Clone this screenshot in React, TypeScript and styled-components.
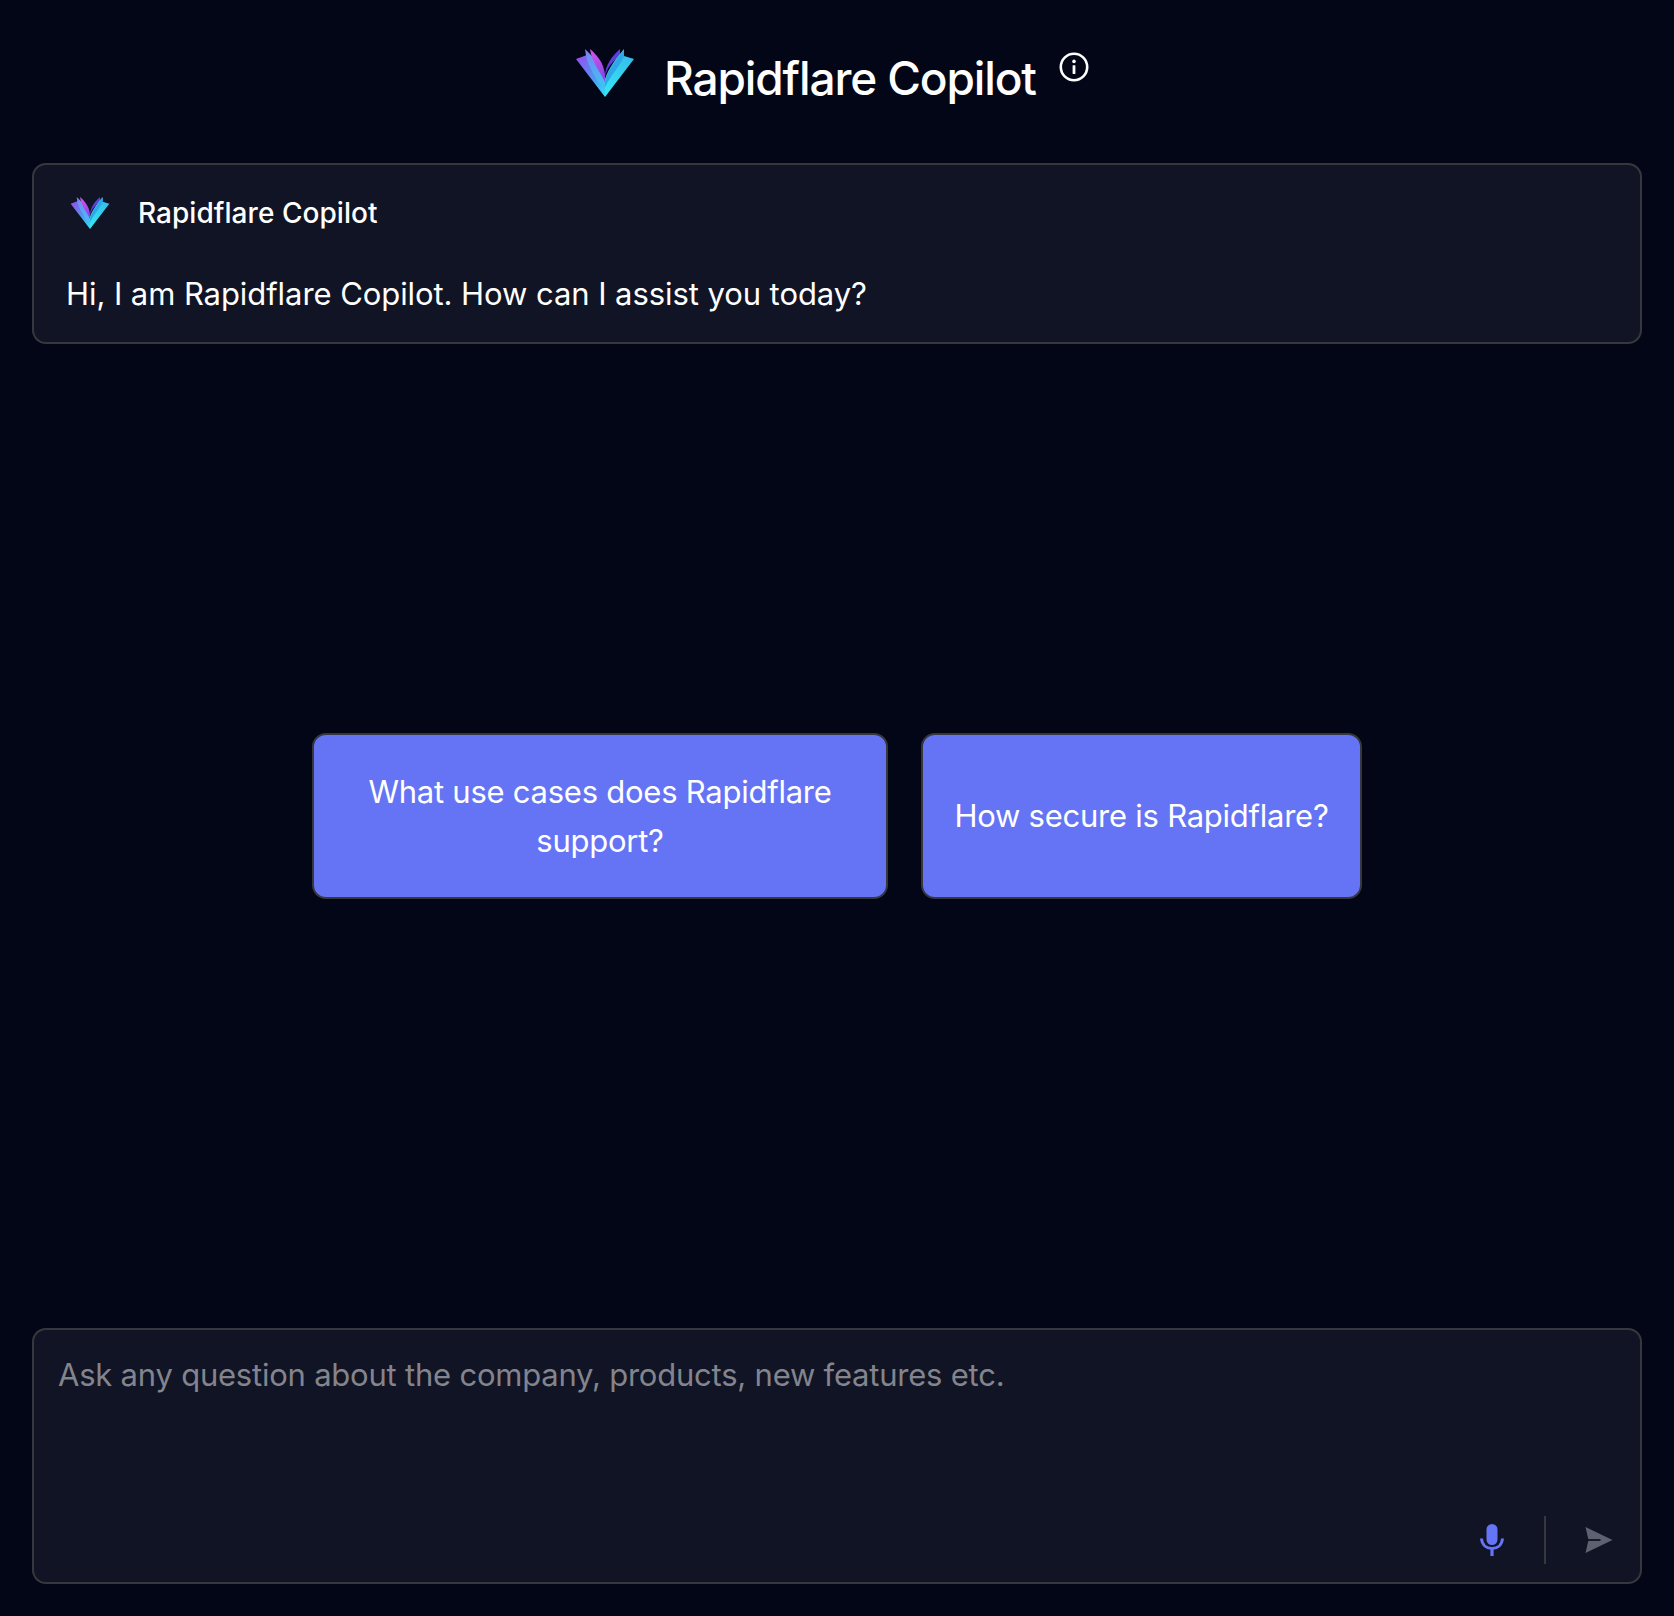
import React from "react";
import styled, { createGlobalStyle } from "styled-components";

const GlobalStyle = createGlobalStyle`
  html, body {
    margin: 0;
    padding: 0;
    background: #020617;
  }
  * {
    box-sizing: border-box;
  }
`;

function Logo({ size, id }: { size: number; id: string }) {
  return (
    <svg width={size} height={size * 0.8} viewBox="0 0 60 48" fill="none">
      <defs>
        <linearGradient id={`${id}-left`} x1="3" y1="10" x2="30" y2="46" gradientUnits="userSpaceOnUse">
          <stop offset="0" stopColor="#8f55f2" />
          <stop offset="0.55" stopColor="#5196f2" />
          <stop offset="1" stopColor="#33dcf2" />
        </linearGradient>
        <linearGradient id={`${id}-inner`} x1="14" y1="2" x2="30" y2="34" gradientUnits="userSpaceOnUse">
          <stop offset="0" stopColor="#7488f4" />
          <stop offset="1" stopColor="#42c0f4" />
        </linearGradient>
        <linearGradient id={`${id}-pink`} x1="16" y1="0" x2="30" y2="28" gradientUnits="userSpaceOnUse">
          <stop offset="0" stopColor="#d854ec" />
          <stop offset="1" stopColor="#8a46e6" />
        </linearGradient>
        <linearGradient id={`${id}-right`} x1="58" y1="10" x2="30" y2="46" gradientUnits="userSpaceOnUse">
          <stop offset="0" stopColor="#35bdea" />
          <stop offset="1" stopColor="#35e8f4" />
        </linearGradient>
      </defs>
      <path d="M1 10 L12 6 C14 22 22 32 30 36 L30 48 Z" fill={`url(#${id}-left)`} />
      <path d="M10 0 L18 8 C22 16 28 22 30 30 L30 40 C22 32 12 20 10 0 Z" fill={`url(#${id}-inner)`} />
      <path d="M15 0 C22 6 29 14 30 26 L30 33 C25 22 17 14 15 0 Z" fill={`url(#${id}-pink)`} />
      <path d="M45 0 L45 7 C38 12 32 18 30 28 C30 16 37 7 45 0 Z" fill="#5b3fd8" />
      <path d="M59 10 L49 7 L49 0 C42 8 33 20 30 30 L30 48 Z" fill={`url(#${id}-right)`} />
      <path d="M49 1 C43 9 33 20 30 32 L30 38 C36 26 44 18 49 8 Z" fill="#2fa6e8" />
    </svg>
  );
}

function App() {
  return (
    <>
      <GlobalStyle />
      <Page>
        <Header>
          <Logo size={60} id="big" />
          <Title>Rapidflare Copilot</Title>
          <InfoButton>
            <svg width="30" height="30" viewBox="0 0 30 30" fill="none">
              <circle cx="15" cy="15" r="13.2" stroke="#fff" strokeWidth="2.6" />
              <rect x="13.6" y="13.2" width="2.8" height="8.8" rx="0.6" fill="#fff" />
              <circle cx="15" cy="9.4" r="1.8" fill="#fff" />
            </svg>
          </InfoButton>
        </Header>

        <MessageCard>
          <Sender>
            <Logo size={40} id="small" />
            <SenderName>Rapidflare Copilot</SenderName>
          </Sender>
          <MessageText>Hi, I am Rapidflare Copilot. How can I assist you today?</MessageText>
        </MessageCard>

        <Suggestions>
          <Suggestion $width={576}>What use cases does Rapidflare support?</Suggestion>
          <Suggestion $width={441}>How secure is Rapidflare?</Suggestion>
        </Suggestions>

        <Composer>
          <Question>Ask any question about the company, products, new features etc.</Question>
          <ComposerActions>
            <MicButton>
              <svg width="24" height="33" viewBox="0 0 24 33" fill="none">
                <rect x="6.5" y="0" width="11" height="21" rx="5.5" fill="#6675f5" />
                <path d="M1.5 14.5 C2 21 6.5 24.5 12 24.5 C17.5 24.5 22 21 22.5 14.5" stroke="#6675f5" strokeWidth="3" />
                <rect x="10.4" y="24.5" width="3.2" height="7.5" fill="#6675f5" />
              </svg>
            </MicButton>
            <Divider />
            <SendButton>
              <svg width="28" height="26" viewBox="0 0 28 26" fill="none">
                <path d="M0.5 0 L27.5 13 L0.5 26 L3.5 13 Z" fill="#5e6270" />
                <rect x="2.5" y="12.1" width="13" height="1.8" fill="#101424" />
              </svg>
            </SendButton>
          </ComposerActions>
        </Composer>
      </Page>
    </>
  );
}

const Page = styled.div`
  width: 100%;
  height: 1616px;
  padding: 0 32px 32px;
  display: flex;
  flex-direction: column;
  background: #020617;
  color: #fff;
  font-family: Inter, "Liberation Sans", sans-serif;
`;

const Header = styled.header`
  height: 163px;
  flex-shrink: 0;
  display: flex;
  align-items: flex-start;
  justify-content: center;
  padding: 49px 10px 0 0;
`;

const Title = styled.h1`
  margin: 0 0 0 29px;
  font-size: 46px;
  font-weight: 450;
  line-height: 58px;
  letter-spacing: -1.13px;
`;

const InfoButton = styled.div`
  margin: 3px 0 0 23px;
  width: 30px;
  height: 30px;
`;

const MessageCard = styled.section`
  height: 181px;
  flex-shrink: 0;
  padding: 32px 32px 0;
  border: 2px solid #37383d;
  border-radius: 14px;
  background: #101424;
`;

const Sender = styled.div`
  display: flex;
  align-items: center;
  height: 32px;
  gap: 28px;
  padding-left: 4px;
`;

const SenderName = styled.span`
  font-size: 28px;
  font-weight: 450;
  letter-spacing: 0.05px;
`;

const MessageText = styled.p`
  margin: 41px 0 0;
  font-size: 31px;
  line-height: 48px;
  font-weight: 400;
  letter-spacing: -0.07px;
`;

const Suggestions = styled.div`
  flex: 1;
  display: flex;
  align-items: center;
  justify-content: center;
  gap: 33px;
  padding-bottom: 41px;
`;

const Suggestion = styled.button<{ $width: number }>`
  width: ${(p) => p.$width}px;
  height: 166px;
  padding: 0 28px;
  border: 2px solid #37383d;
  border-radius: 14px;
  background: #6574f4;
  color: #fff;
  font-family: inherit;
  font-size: 31px;
  line-height: 49px;
  font-weight: 400;
  letter-spacing: -0.25px;
  text-align: center;
`;

const Composer = styled.section`
  height: 256px;
  flex-shrink: 0;
  padding: 21px 27px 18px 24px;
  display: flex;
  flex-direction: column;
  justify-content: space-between;
  border: 2px solid #37383d;
  border-radius: 14px;
  background: #101424;
`;

const Question = styled.div`
  font-size: 31px;
  line-height: 48px;
  letter-spacing: -0.22px;
  color: #83848d;
`;

const ComposerActions = styled.div`
  display: flex;
  align-items: center;
  justify-content: flex-end;
`;

const MicButton = styled.div`
  width: 24px;
  height: 33px;
`;

const Divider = styled.div`
  width: 2px;
  height: 48px;
  margin: 0 39px 0 40px;
  background: #37383d;
`;

const SendButton = styled.div`
  width: 28px;
  height: 26px;
`;

export default App;
